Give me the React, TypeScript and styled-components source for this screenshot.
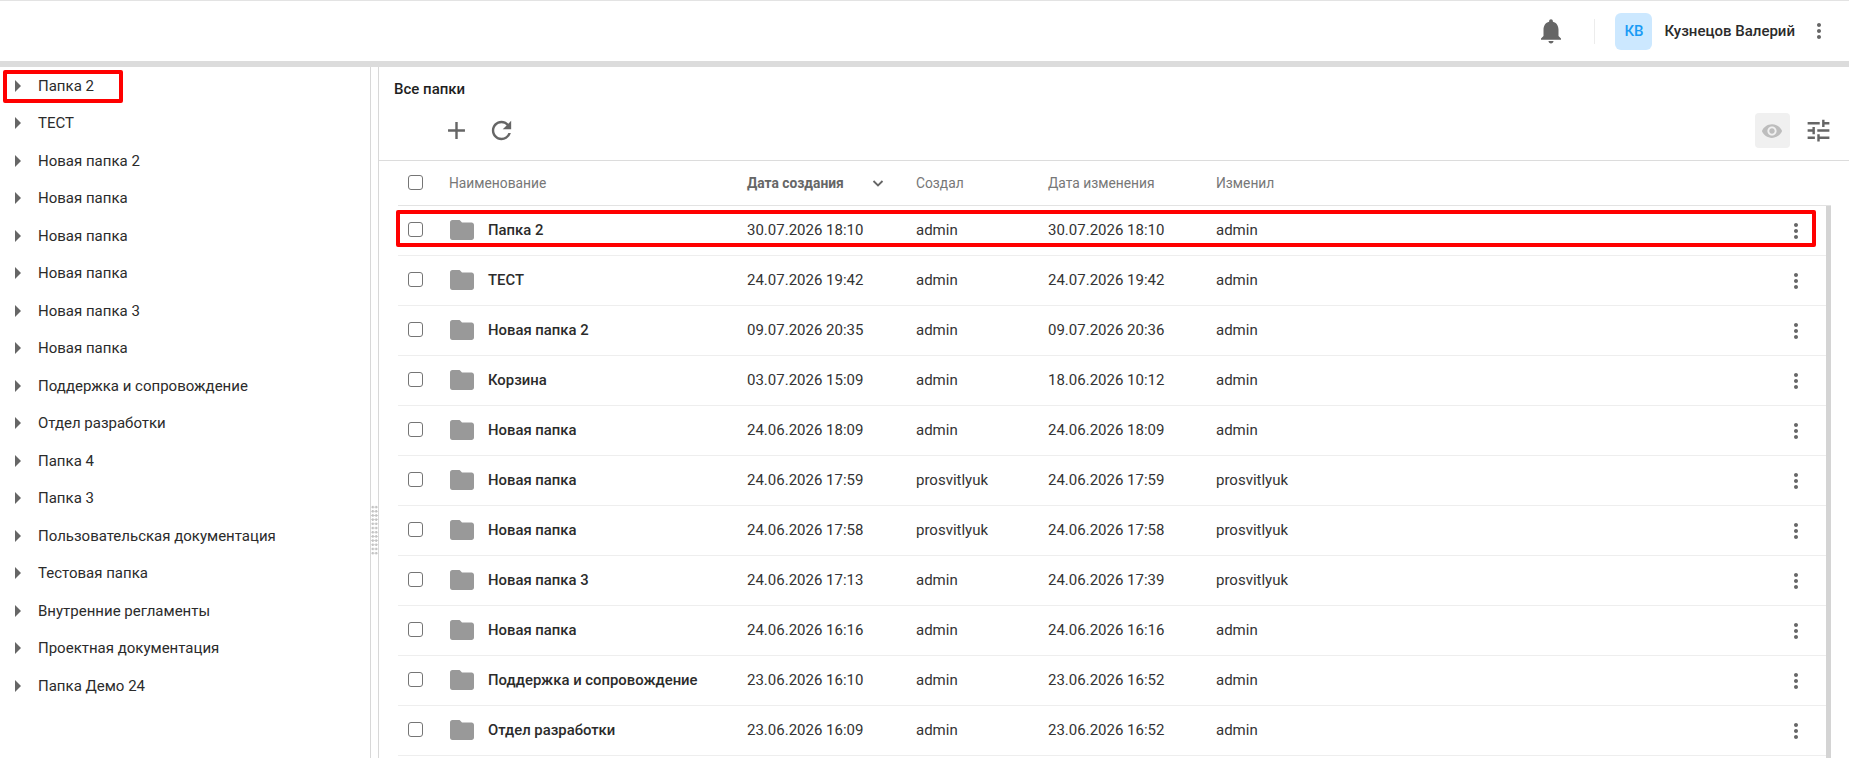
import React from "react";
import styled, { createGlobalStyle } from "styled-components";

const Global = createGlobalStyle`
  html, body { margin: 0; padding: 0; height: 100%; overflow: hidden; background: #fff; }
  body { font-family: Roboto, "Noto Sans", sans-serif; color: #2b2b2b; }
  * { box-sizing: border-box; }
`;

const Page = styled.div`
  display: flex;
  flex-direction: column;
  width: 1849px;
  height: 758px;
  overflow: hidden;
`;

const TopBar = styled.header`
  flex: none;
  height: 67px;
  border-top: 1px solid #e3e3e3;
  border-bottom: 6px solid #dcdcdc;
  display: flex;
  align-items: center;
  justify-content: flex-end;
  padding-right: 18px;
`;

const Bell = styled.svg`
  width: 30px;
  height: 30px;
  fill: #666;
  margin-right: 28px;
`;

const VDivider = styled.div`
  width: 1px;
  height: 25px;
  background: #ececec;
  margin-right: 20px;
`;

const Avatar = styled.div`
  width: 37px;
  height: 37px;
  border-radius: 6px;
  background: #cce8ff;
  color: #1a9bf5;
  font-size: 15px;
  font-weight: 500;
  display: flex;
  align-items: center;
  justify-content: center;
  margin-right: 12px;
`;

const UserName = styled.div`
  font-size: 15px;
  font-weight: 500;
  color: #2b2b2b;
  margin-right: 12px;
`;

const Kebab = styled.svg`
  width: 24px;
  height: 24px;
  fill: #666;
  flex: none;
`;

const Body = styled.div`
  flex: 1;
  display: flex;
  min-height: 0;
`;

const Sidebar = styled.nav`
  flex: none;
  width: 371px;
  border-right: 1px solid #d8d8d8;
`;

const TreeItem = styled.div`
  position: relative;
  height: 37.5px;
  display: flex;
  align-items: center;
  padding-left: 15px;
  font-size: 15px;
  color: #2b2b2b;
`;

const Arrow = styled.span`
  width: 0;
  height: 0;
  border-top: 6px solid transparent;
  border-bottom: 6px solid transparent;
  border-left: 6.5px solid #666;
  margin-right: 17px;
`;

const SidebarMark = styled.div`
  position: absolute;
  left: 3px;
  top: 3px;
  width: 120px;
  height: 33px;
  border: 4px solid #f00;
  border-radius: 2px;
`;

const Splitter = styled.div`
  flex: none;
  width: 8px;
  border-right: 1px solid #d8d8d8;
`;

const Grip = styled.div`
  width: 7px;
  height: 50px;
  margin-top: 438px;
  background-image: radial-gradient(circle, #c4c4c4 1.3px, transparent 1.4px);
  background-size: 3.5px 4.2px;
`;

const Main = styled.main`
  flex: 1;
  min-width: 0;
  display: flex;
  flex-direction: column;
`;

const Heading = styled.h2`
  margin: 0;
  height: 43px;
  padding: 14px 0 0 15px;
  font-size: 15px;
  line-height: 16px;
  font-weight: 500;
  color: #1f1f1f;
`;

const Toolbar = styled.div`
  flex: none;
  height: 51px;
  border-bottom: 1px solid #dcdcdc;
  display: flex;
  align-items: flex-start;
  padding: 6px 16px 0 63px;
  gap: 15.5px;
`;

const ToolIcon = styled.svg`
  width: 29px;
  height: 29px;
  fill: #666;
  flex: none;
`;

const ToolSpacer = styled.div`
  flex: 1;
`;

const EyeButton = styled.div`
  width: 35px;
  height: 35px;
  margin-top: -3px;
  margin-right: -1px;
  border-radius: 4px;
  background: #f0f0f0;
  display: flex;
  align-items: center;
  justify-content: center;
`;

const EyeIcon = styled.svg`
  width: 22px;
  height: 22px;
  fill: #bdbdbd;
`;

const TableWrap = styled.div`
  flex: 1;
  min-height: 0;
  padding: 0 18px 0 19px;
  overflow: hidden;
`;

const columns = "41px 298px 169px 132px 168px 1fr 46px";

const HeadRow = styled.div`
  display: grid;
  grid-template-columns: ${columns};
  align-items: center;
  height: 44px;
  padding: 0 0 1px 10px;
  font-size: 13.8px;
  color: #777;
`;

const SortCell = styled.div`
  display: flex;
  align-items: center;
  justify-content: space-between;
  padding-right: 30px;
  font-weight: 700;
  color: #666;
`;

const Chevron = styled.svg`
  width: 16px;
  height: 16px;
  fill: none;
  stroke: #666;
  stroke-width: 1.8;
`;

const ScrollArea = styled.div`
  display: flex;
  border-top: 1px solid #e3e3e3;
`;

const Rows = styled.div`
  flex: 1;
  min-width: 0;
`;

const Scrollbar = styled.div`
  flex: none;
  width: 5px;
  height: 553px;
  background: #d4d4d4;
`;

const Row = styled.div`
  position: relative;
  display: grid;
  grid-template-columns: ${columns};
  align-items: center;
  height: 50px;
  padding: 0 0 2px 10px;
  border-bottom: 1px solid #eee;
  font-size: 15px;
  color: #333;
`;

const RowMark = styled.div`
  position: absolute;
  left: -2px;
  top: 4px;
  width: 1420px;
  height: 37px;
  border: 4px solid #f00;
  border-radius: 2px;
`;

const Box = styled.span`
  display: block;
  width: 15px;
  height: 15px;
  border: 1.4px solid #757575;
  border-radius: 3px;
  background: #fff;
`;

const NameCell = styled.div`
  display: flex;
  align-items: center;
  gap: 14px;
  padding-left: 1px;
  font-size: 14.85px;
  font-weight: 500;
  color: #2b2b2b;
`;

const FolderIcon = styled.svg`
  width: 24px;
  height: 20px;
  fill: #999;
  flex: none;
`;

const MenuCell = styled.div`
  grid-column: 7;
  display: flex;
  justify-content: flex-start;
  padding: 2px 0 0 4px;
`;

const P = {
  bell: "M12 22c1.1 0 2-.9 2-2h-4c0 1.1.89 2 2 2zm6-6v-5c0-3.07-1.64-5.64-4.5-6.32V4c0-.83-.67-1.5-1.5-1.5s-1.5.67-1.5 1.5v.68C7.63 5.36 6 7.92 6 11v5l-2 2v1h16v-1l-2-2z",
  more: "M12 8c1.1 0 2-.9 2-2s-.9-2-2-2-2 .9-2 2 .9 2 2 2zm0 2c-1.1 0-2 .9-2 2s.9 2 2 2 2-.9 2-2-.9-2-2-2zm0 6c-1.1 0-2 .9-2 2s.9 2 2 2 2-.9 2-2-.9-2-2-2z",
  add: "M19 13h-6v6h-2v-6H5v-2h6V5h2v6h6v2z",
  refresh: "M17.65 6.35C16.2 4.9 14.21 4 12 4c-4.42 0-7.99 3.58-7.99 8s3.57 8 7.99 8c3.73 0 6.84-2.55 7.73-6h-2.08c-.82 2.33-3.04 4-5.65 4-3.31 0-6-2.69-6-6s2.69-6 6-6c1.66 0 3.14.69 4.22 1.78L13 11h7V4l-2.35 2.35z",
  eye: "M12 4.5C7 4.5 2.73 7.61 1 12c1.73 4.39 6 7.5 11 7.5s9.27-3.11 11-7.5c-1.73-4.39-6-7.5-11-7.5zM12 17c-2.76 0-5-2.24-5-5s2.24-5 5-5 5 2.24 5 5-2.24 5-5 5zm0-8c-1.66 0-3 1.34-3 3s1.34 3 3 3 3-1.34 3-3-1.34-3-3-3z",
  tune: "M3 17v2h6v-2H3zM3 5v2h10V5H3zm10 16v-2h8v-2h-8v-2h-2v6h2zM7 9v2H3v2h4v2h2V9H7zm14 4v-2H11v2h10zm-6-4h2V7h4V5h-4V3h-2v6z",
  folder: "M10 4H4c-1.1 0-1.99.9-1.99 2L2 18c0 1.1.9 2 2 2h16c1.1 0 2-.9 2-2V8c0-1.1-.9-2-2-2h-8l-2-2z",
};

const tree = [
  "Папка 2", "ТЕСТ", "Новая папка 2", "Новая папка", "Новая папка", "Новая папка",
  "Новая папка 3", "Новая папка", "Поддержка и сопровождение", "Отдел разработки",
  "Папка 4", "Папка 3", "Пользовательская документация", "Тестовая папка",
  "Внутренние регламенты", "Проектная документация", "Папка Демо 24",
];

const rows = [
  ["Папка 2", "30.07.2026 18:10", "admin", "30.07.2026 18:10", "admin"],
  ["ТЕСТ", "24.07.2026 19:42", "admin", "24.07.2026 19:42", "admin"],
  ["Новая папка 2", "09.07.2026 20:35", "admin", "09.07.2026 20:36", "admin"],
  ["Корзина", "03.07.2026 15:09", "admin", "18.06.2026 10:12", "admin"],
  ["Новая папка", "24.06.2026 18:09", "admin", "24.06.2026 18:09", "admin"],
  ["Новая папка", "24.06.2026 17:59", "prosvitlyuk", "24.06.2026 17:59", "prosvitlyuk"],
  ["Новая папка", "24.06.2026 17:58", "prosvitlyuk", "24.06.2026 17:58", "prosvitlyuk"],
  ["Новая папка 3", "24.06.2026 17:13", "admin", "24.06.2026 17:39", "prosvitlyuk"],
  ["Новая папка", "24.06.2026 16:16", "admin", "24.06.2026 16:16", "admin"],
  ["Поддержка и сопровождение", "23.06.2026 16:10", "admin", "23.06.2026 16:52", "admin"],
  ["Отдел разработки", "23.06.2026 16:09", "admin", "23.06.2026 16:52", "admin"],
];

export default function App() {
  return (
    <Page>
      <Global />
      <TopBar>
        <Bell viewBox="0 0 24 24"><path d={P.bell} /></Bell>
        <VDivider />
        <Avatar>КВ</Avatar>
        <UserName>Кузнецов Валерий</UserName>
        <Kebab viewBox="0 0 24 24"><path d={P.more} /></Kebab>
      </TopBar>
      <Body>
        <Sidebar>
          {tree.map((name, i) => (
            <TreeItem key={i}>
              <Arrow />
              {name}
              {i === 0 && <SidebarMark />}
            </TreeItem>
          ))}
        </Sidebar>
        <Splitter><Grip /></Splitter>
        <Main>
          <Heading>Все папки</Heading>
          <Toolbar>
            <ToolIcon viewBox="0 0 24 24"><path d={P.add} /></ToolIcon>
            <ToolIcon viewBox="0 0 24 24"><path d={P.refresh} /></ToolIcon>
            <ToolSpacer />
            <EyeButton><EyeIcon viewBox="0 0 24 24"><path d={P.eye} /></EyeIcon></EyeButton>
            <ToolIcon viewBox="0 0 24 24"><path d={P.tune} /></ToolIcon>
          </Toolbar>
          <TableWrap>
            <HeadRow>
              <Box />
              <div>Наименование</div>
              <SortCell>
                Дата создания
                <Chevron viewBox="0 0 16 16"><path d="M3.5 6l4.5 4.5L12.5 6" /></Chevron>
              </SortCell>
              <div>Создал</div>
              <div>Дата изменения</div>
              <div>Изменил</div>
            </HeadRow>
            <ScrollArea>
              <Rows>
                {rows.map((r, i) => (
                  <Row key={i}>
                    <Box />
                    <NameCell>
                      <FolderIcon viewBox="2 4 20 16" preserveAspectRatio="none"><path d={P.folder} /></FolderIcon>
                      {r[0]}
                    </NameCell>
                    <div>{r[1]}</div>
                    <div>{r[2]}</div>
                    <div>{r[3]}</div>
                    <div>{r[4]}</div>
                    <MenuCell><Kebab viewBox="0 0 24 24"><path d={P.more} /></Kebab></MenuCell>
                    {i === 0 && <RowMark />}
                  </Row>
                ))}
              </Rows>
              <Scrollbar />
            </ScrollArea>
          </TableWrap>
        </Main>
      </Body>
    </Page>
  );
}
